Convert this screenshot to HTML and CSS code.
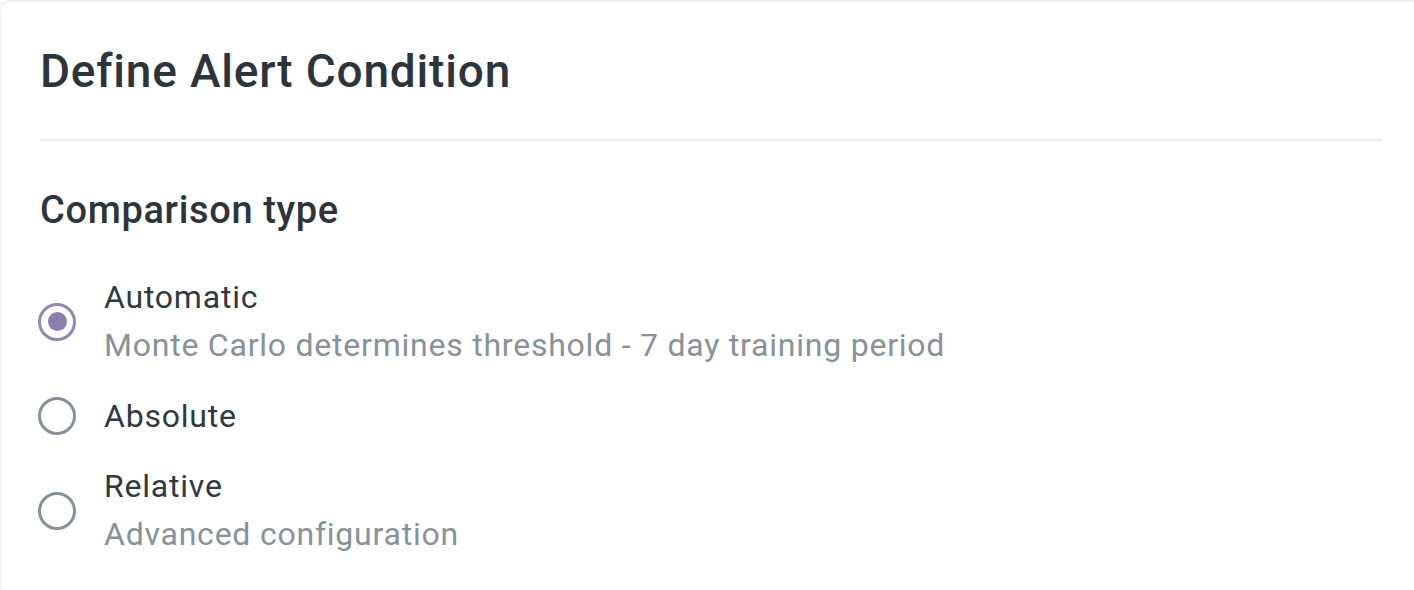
FILE: index.html
```html
<!DOCTYPE html>
<html lang="en">
<head>
<meta charset="utf-8">
<title>Define Alert Condition</title>
<link rel="stylesheet" href="styles.css">
</head>
<body>
<section class="card">
  <h1 class="title">Define Alert Condition</h1>
  <hr class="divider">
  <h2 class="subtitle">Comparison type</h2>
  <div class="radio-list" role="radiogroup">
    <label class="radio-item">
      <span class="radio radio-checked"><span class="radio-dot"></span></span>
      <span class="radio-text">
        <span class="radio-label">Automatic</span>
        <span class="radio-desc">Monte Carlo determines threshold - 7 day training period</span>
      </span>
    </label>
    <label class="radio-item">
      <span class="radio"></span>
      <span class="radio-text">
        <span class="radio-label">Absolute</span>
      </span>
    </label>
    <label class="radio-item">
      <span class="radio"></span>
      <span class="radio-text">
        <span class="radio-label">Relative</span>
        <span class="radio-desc">Advanced configuration</span>
      </span>
    </label>
  </div>
</section>
</body>
</html>
```
FILE: styles.css
```css
html, body {
  margin: 0;
  padding: 0;
  background: #ffffff;
  overflow: hidden;
}

body {
  font-family: Roboto, "Liberation Sans", sans-serif;
  color: #2f3941;
}

.card {
  box-sizing: border-box;
  margin-right: -6px;
  border-top: 2px solid #eceef1;
  border-left: 1px solid #f1f2f4;
  border-radius: 10px 0 0 0;
  padding: 41px 38px 40px 39px;
  background: #ffffff;
}

.title {
  margin: 0;
  font-size: 46px;
  line-height: 56px;
  font-weight: 500;
  letter-spacing: 0.8px;
  color: #2c353d;
}

.divider {
  margin: 40px 0 0 0;
  border: none;
  height: 2px;
  background: #e9ebee;
}

.subtitle {
  margin: 46px 0 0 0;
  font-size: 38px;
  line-height: 46px;
  font-weight: 500;
  letter-spacing: 0.65px;
  color: #2c353d;
}

.radio-list {
  margin-top: 40px;
  display: flex;
  flex-direction: column;
  gap: 22px;
}

.radio-item {
  display: flex;
  align-items: center;
  gap: 28px;
}

.radio {
  box-sizing: border-box;
  flex: none;
  width: 38px;
  height: 38px;
  margin-left: -2px;
  border: 3px solid #87919a;
  border-radius: 50%;
  display: flex;
  align-items: center;
  justify-content: center;
}

.radio-checked {
  border-color: #9387b3;
}

.radio-dot {
  width: 19px;
  height: 19px;
  border-radius: 50%;
  background: #8a7eab;
}

.radio-text {
  display: flex;
  flex-direction: column;
}

.radio-label {
  font-size: 32px;
  line-height: 48px;
  letter-spacing: 0.78px;
  color: #2f3941;
}

.radio-desc {
  font-size: 32px;
  line-height: 49px;
  letter-spacing: 0.77px;
  color: #87929b;
}
```
